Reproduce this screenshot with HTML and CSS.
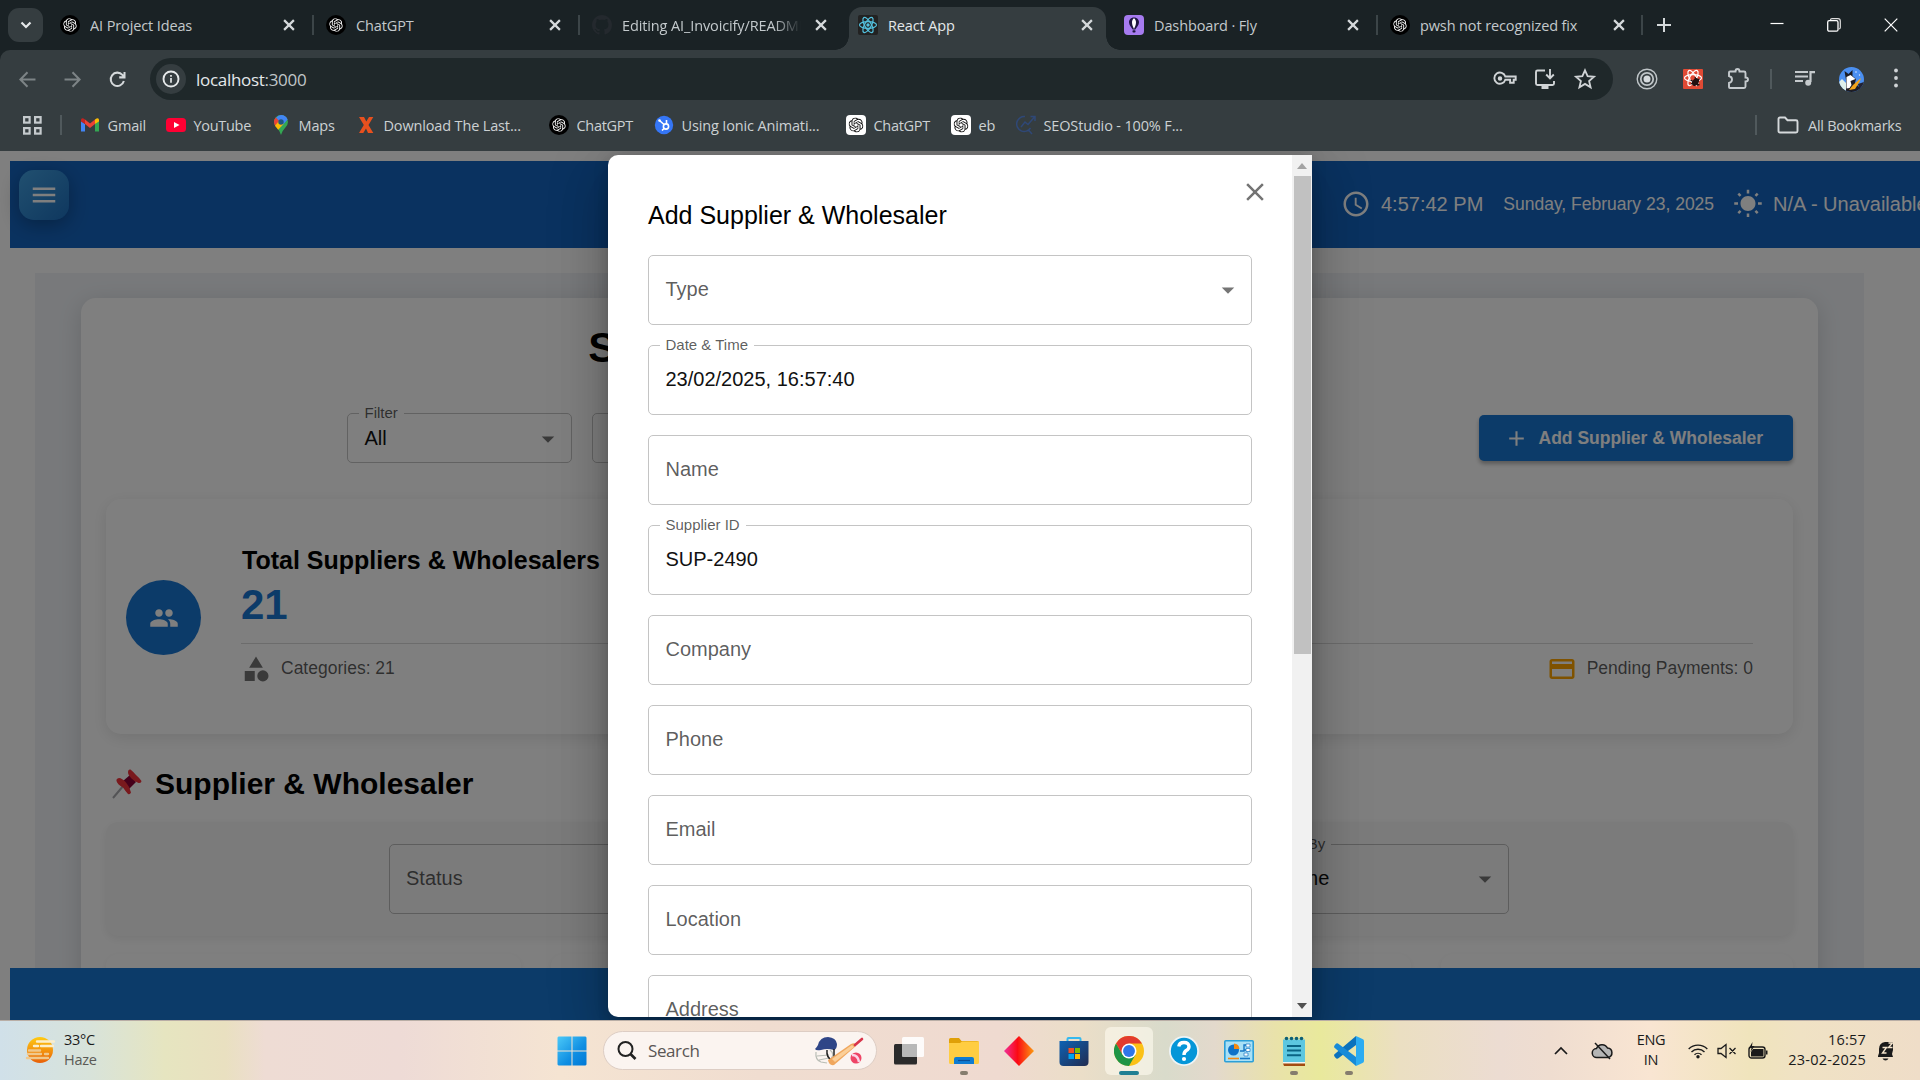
FILE: index.html
```html
<!DOCTYPE html>
<html lang="en">
<head>
<meta charset="utf-8">
<title>React App</title>
<link rel="stylesheet" href="styles.css">
</head>
<body>
<svg class="defs" aria-hidden="true">
  <symbol id="gpt" viewBox="0 0 24 24"><path d="M22.2819 9.8211a5.9847 5.9847 0 0 0-.5157-4.9108 6.0462 6.0462 0 0 0-6.5098-2.9A6.0651 6.0651 0 0 0 4.9807 4.1818a5.9847 5.9847 0 0 0-3.9977 2.9 6.0462 6.0462 0 0 0 .7427 7.0966 5.98 5.98 0 0 0 .511 4.9107 6.051 6.051 0 0 0 6.5146 2.9001A5.9847 5.9847 0 0 0 13.2599 24a6.0557 6.0557 0 0 0 5.7718-4.2058 5.9894 5.9894 0 0 0 3.9977-2.9001 6.0557 6.0557 0 0 0-.7475-7.0729zm-9.022 12.6081a4.4755 4.4755 0 0 1-2.8764-1.0408l.1419-.0804 4.7783-2.7582a.7948.7948 0 0 0 .3927-.6813v-6.7369l2.02 1.1686a.071.071 0 0 1 .038.052v5.5826a4.504 4.504 0 0 1-4.4945 4.4944zm-9.6607-4.1254a4.4708 4.4708 0 0 1-.5346-3.0137l.142.0852 4.783 2.7582a.7712.7712 0 0 0 .7806 0l5.8428-3.3685v2.3324a.0804.0804 0 0 1-.0332.0615L9.74 19.9502a4.4992 4.4992 0 0 1-6.1408-1.6464zM2.3408 7.8956a4.485 4.485 0 0 1 2.3655-1.9728V11.6a.7664.7664 0 0 0 .3879.6765l5.8144 3.3543-2.0201 1.1685a.0757.0757 0 0 1-.071 0l-4.8303-2.7865A4.504 4.504 0 0 1 2.3408 7.872zm16.5963 3.8558L13.1038 8.364 15.1192 7.2a.0757.0757 0 0 1 .071 0l4.8303 2.7913a4.4944 4.4944 0 0 1-.6765 8.1042v-5.6772a.79.79 0 0 0-.407-.667zm2.0107-3.0231l-.142-.0852-4.7735-2.7818a.7759.7759 0 0 0-.7854 0L9.409 9.2297V6.8974a.0662.0662 0 0 1 .0284-.0615l4.8303-2.7866a4.4992 4.4992 0 0 1 6.6802 4.66zM8.3065 12.863l-2.02-1.1638a.0804.0804 0 0 1-.038-.0567V6.0742a4.4992 4.4992 0 0 1 7.3757-3.4537l-.142.0805L8.704 5.459a.7948.7948 0 0 0-.3927.6813zm1.0976-2.3654l2.602-1.4998 2.6069 1.4998v2.9994l-2.5974 1.4997-2.6067-1.4997Z"/></symbol>
  <symbol id="gpt-dark" viewBox="0 0 20 20"><circle cx="10" cy="10" r="10" fill="#000"/><use href="#gpt" x="3.2" y="3.2" width="13.6" height="13.6" fill="#fff"/></symbol>
  <symbol id="gpt-light" viewBox="0 0 20 20"><rect width="20" height="20" rx="4" fill="#fff"/><use href="#gpt" x="2.6" y="2.6" width="14.8" height="14.8" fill="#111"/></symbol>
  <symbol id="x" viewBox="0 0 12 12"><path d="M1.8 1.8l8.4 8.4M10.2 1.8l-8.4 8.4" stroke="currentColor" stroke-width="1.9" fill="none"/></symbol>
  <symbol id="drop" viewBox="0 0 24 24"><path d="M7 10l5 5 5-5z" fill="currentColor"/></symbol>
</svg>

<div class="tabstrip">
  <div class="tab-search"><svg width="12" height="8" viewBox="0 0 12 8"><path d="M1.5 1.5L6 6l4.500-4.500" stroke="#e6e9ea" stroke-width="2.200" fill="none"/></svg></div>
  <div class="tab"><svg class="ico"><use href="#gpt-dark"/></svg><span class="tab-title">AI Project Ideas</span><svg class="tab-x"><use href="#x"/></svg></div>
  <div class="tab divided"><svg class="ico"><use href="#gpt-dark"/></svg><span class="tab-title">ChatGPT</span><svg class="tab-x"><use href="#x"/></svg></div>
  <div class="tab divided"><svg class="ico" viewBox="0 0 16 16"><path fill="#24292e" d="M8 0C3.580 0 0 3.580 0 8c0 3.540 2.290 6.530 5.470 7.590.4.070.55-.17.55-.38 0-.19-.01-.82-.01-1.490-2.010.37-2.530-.49-2.690-.94-.09-.23-.48-.94-.82-1.130-.28-.15-.68-.52-.01-.53.63-.01 1.080.58 1.230.82.72 1.210 1.870.87 2.330.66.070-.52.28-.87.51-1.070-1.780-.2-3.640-.89-3.640-3.950 0-.87.31-1.590.82-2.150-.08-.2-.36-1.020.08-2.120 0 0 .67-.21 2.200.82.64-.18 1.320-.27 2-.27s1.360.09 2 .27c1.530-1.040 2.200-.82 2.200-.82.44 1.100.16 1.920.08 2.120.51.56.82 1.270.82 2.150 0 3.070-1.870 3.750-3.650 3.950.29.25.54.73.54 1.480 0 1.070-.01 1.930-.01 2.200 0 .21.15.46.55.38A8.010 8.010 0 0 0 16 8c0-4.420-3.580-8-8-8z"/></svg><span class="tab-title faded">Editing AI_Invoicify/README</span><svg class="tab-x"><use href="#x"/></svg></div>
  <div class="tab active"><svg class="ico" viewBox="0 0 20 20"><rect width="20" height="20" rx="2" fill="#222"/><g fill="none" stroke="#53c1de" stroke-width="1.200"><ellipse cx="10" cy="10" rx="8.500" ry="3.300"/><ellipse cx="10" cy="10" rx="8.500" ry="3.300" transform="rotate(60 10 10)"/><ellipse cx="10" cy="10" rx="8.500" ry="3.300" transform="rotate(120 10 10)"/></g><circle cx="10" cy="10" r="1.700" fill="#53c1de"/></svg><span class="tab-title">React App</span><svg class="tab-x"><use href="#x"/></svg></div>
  <div class="tab"><svg class="ico" viewBox="0 0 20 20"><rect width="20" height="20" rx="4" fill="#a67bf0"/><path d="M10 2.500c3.200 0 5 2.200 5 4.800 0 2.900-2.200 4.700-3.700 7.200H8.700C7.200 12 5 10.200 5 7.300c0-2.600 1.800-4.800 5-4.800z" fill="#1e1540"/><path d="M10 3.200c1.500 1 2 2.600 2 4.300 0 2.400-1.200 4.500-2 6.500-.8-2-2-4.100-2-6.500 0-1.700.5-3.300 2-4.300z" fill="#fff"/><rect x="8.500" y="15.200" width="3" height="2.300" rx=".8" fill="#1e1540"/></svg><span class="tab-title">Dashboard · Fly</span><svg class="tab-x"><use href="#x"/></svg></div>
  <div class="tab divided"><svg class="ico"><use href="#gpt-dark"/></svg><span class="tab-title">pwsh not recognized fix</span><svg class="tab-x"><use href="#x"/></svg></div>
  <div class="new-tab"><svg width="14" height="14" viewBox="0 0 14 14"><path d="M7 0v14M0 7h14" stroke="#d5d9db" stroke-width="2"/></svg></div>
  <div class="win-controls">
    <svg viewBox="0 0 14 14"><path d="M.5 5.500h13" stroke="#fff" stroke-width="1.200"/></svg>
    <svg viewBox="0 0 14 14"><path d="M3.500 3V2Q3.500 .7 5 .7h6q2.300 0 2.300 2.300v6.500q0 1.500-1.500 1.500" fill="none" stroke="#ddd" stroke-width="1.200"/><rect x=".7" y="2.700" width="10.300" height="10.500" rx="1.500" fill="none" stroke="#fff" stroke-width="1.300"/></svg>
    <svg viewBox="0 0 14 14"><path d="M.7.7l12.600 12.600M13.300.7L.7 13.300" stroke="#fff" stroke-width="1.200"/></svg>
  </div>
</div>

<div class="chrome">
  <div class="toolbar">
    <svg class="nav dim" viewBox="0 0 16 16"><path d="M15.500 8H1.500M8 1.200L1.300 8 8 14.800"/></svg>
    <svg class="nav dim" viewBox="0 0 16 16"><path d="M.5 8h14M8 1.200L14.700 8 8 14.800"/></svg>
    <svg class="nav" viewBox="0 0 16 16"><path d="M14 9.500A6.300 6.300 0 1 1 12.600 3.600L14 5.200M14.600 1v5h-5"/></svg>
    <div class="omnibox">
      <span class="info"><svg width="18" height="18" viewBox="0 0 18 18"><circle cx="9" cy="9" r="7.500" fill="none" stroke="#e6e9ea" stroke-width="1.900"/><path d="M9 8v4.700M9 5v1.800" stroke="#e6e9ea" stroke-width="1.700"/></svg></span>
      <span class="url">localhost<span class="port">:3000</span></span>
      <svg class="act" viewBox="0 0 24 24"><g fill="none" stroke="#d0d4d6" stroke-width="1.900"><path d="M12.300 9.500H22.700v3.300h-2v3h-3.600v-3h-4.800A5.600 5.600 0 1 1 12.300 9.500z"/><circle cx="7" cy="11.500" r="1.300" fill="#d0d4d6"/></g></svg>
      <svg class="act" viewBox="0 0 24 24"><g fill="none" stroke="#d0d4d6" stroke-width="1.900"><path d="M12 3.500H4.500Q3 3.500 3 5v11.500q0 1.500 1.500 1.500h15q1.500 0 1.500-1.500V14M17 2v9M13.200 7.500L17 11.300l3.800-3.800"/><path d="M8.500 20.500h7" stroke-width="3"/></g></svg>
      <svg class="act" viewBox="0 0 24 24"><path d="M12 3.300l2.600 5.900 6.400.6-4.900 4.200 1.500 6.300-5.600-3.400-5.600 3.400 1.500-6.300L3 9.800l6.400-.6z" fill="none" stroke="#d0d4d6" stroke-width="1.800"/></svg>
    </div>
    <div class="extensions">
      <svg viewBox="0 0 24 24"><g fill="none" stroke="#bfc5c8"><circle cx="12" cy="12" r="9.800" stroke-width="1.400"/><circle cx="12" cy="12" r="6.200" stroke-width="1.800"/></g><circle cx="12" cy="12" r="3.500" fill="#d5dadd"/></svg>
      <svg viewBox="0 0 24 24"><rect x="2" y="2" width="20" height="20" rx="1" fill="#e04a34"/><g fill="none" stroke="#fff" stroke-width="1.200"><ellipse cx="12" cy="11" rx="8.500" ry="3.300"/><ellipse cx="12" cy="11" rx="8.500" ry="3.300" transform="rotate(60 12 11)"/><ellipse cx="12" cy="11" rx="8.500" ry="3.300" transform="rotate(120 12 11)"/></g><ellipse cx="14.500" cy="15" rx="3" ry="4.200" fill="#211" transform="rotate(35 14.500 15)"/><path d="M9.500 13l9 5M10 17l8.500-5M14 10l3 9" stroke="#211" stroke-width="1.200"/></svg>
      <svg viewBox="0 0 24 24"><path d="M4 4.500h5.500Q9.500 2 11.500 2t2 2.500H18Q19.500 4.500 19.500 6v4.500q2.500 0 2.500 2t-2.500 2v5q0 1.500-1.500 1.500H4Q3 21 3 20v-4q3-.8 3-3.500T3 9V5.500Q3 4.500 4 4.500z" fill="none" stroke="#c5cacd" stroke-width="1.900"/></svg>
      <i class="sep"></i>
      <svg viewBox="0 0 24 24"><path d="M2 5h13M2 9.500h13M2 14h8" stroke="#c5cacd" stroke-width="2" /><path d="M17.500 15V5.200H22" fill="none" stroke="#c5cacd" stroke-width="2.200"/><circle cx="15.200" cy="15.800" r="3" fill="#c5cacd"/></svg>
      <svg class="avatar" viewBox="0 0 25 25"><defs><clipPath id="av"><circle cx="12.500" cy="12.500" r="12.500"/></clipPath></defs><g clip-path="url(#av)"><rect width="25" height="25" fill="#4b8ff0"/><path d="M0 15l3-3 4 4v9H0z" fill="#dff0ea"/><path d="M7 25V13L5.500 4l4 3 4-4v6l3.500 3-1 4 6 6v3z" fill="#1c1c24"/><path d="M7.500 10l4-2 5 4-5 2 1 4-2 3-3 .500z" fill="#fff"/><path d="M22 11l-8 7-4 5 6-1 5-8z" fill="#f2a31b"/><path d="M19 17l6-2v7l-4 3z" fill="#223"/><circle cx="17" cy="5" r=".8" fill="#dce9ff"/><circle cx="20.500" cy="8" r=".7" fill="#dce9ff"/></g></svg>
      <svg viewBox="0 0 24 24"><g fill="#d0d4d6"><circle cx="12" cy="3.500" r="1.900"/><circle cx="12" cy="11" r="1.900"/><circle cx="12" cy="18.500" r="1.900"/></g></svg>
    </div>
  </div>
  <div class="bookmarks">
    <svg class="apps" viewBox="0 0 19 19"><g fill="none" stroke="#c5cacd" stroke-width="2.200"><rect x="1.100" y="1.100" width="5.500" height="5.500"/><rect x="12.100" y="1.100" width="5.500" height="5.500"/><rect x="1.100" y="12.100" width="5.500" height="5.500"/><rect x="12.100" y="12.100" width="5.500" height="5.500"/></g></svg>
    <i class="sep"></i>
    <span class="bm b1"><svg viewBox="0 0 20 20"><path d="M1 16.500V6l4 3v7.500z" fill="#4285f4"/><path d="M15 16.500V9l4-3v10.500z" fill="#34a853"/><path d="M15 9V4.500l1.500-1Q19 2.800 19 5v1.500z" fill="#fbbc04"/><path d="M5 9V4.500l5 4 5-4V9l-5 4z" fill="#ea4335"/><path d="M1 6.500V5q0-2.200 2.500-1.500l1.500 1V9z" fill="#c5221f"/></svg>Gmail</span>
    <span class="bm b2"><svg viewBox="0 0 20 20"><rect y="3" width="20" height="14" rx="3.500" fill="#f03"/><path d="M8 7l5.500 3L8 13z" fill="#fff"/></svg>YouTube</span>
    <span class="bm b3"><svg viewBox="0 0 20 20"><path d="M10 20q-1-4-4-7-3-3-3-6a7 7 0 0 1 14 0q0 3-3 6-3 3-4 7z" fill="#34a853"/><path d="M10 0a7 7 0 0 1 6.600 4.500L10 12 5 3q2-3 5-3z" fill="#4285f4"/><path d="M4.700 2.500L9 6.500l-4.500 5Q3 9.500 3 7q0-2.700 1.700-4.500z" fill="#ea4335"/><path d="M4 10.700l5-5.900 3.500 4.200-5.300 5.700z" fill="#fbbc04"/><circle cx="10" cy="7" r="2.700" fill="#21577f"/></svg>Maps</span>
    <span class="bm b4"><svg viewBox="0 0 20 20"><path d="M3 2h5l2.300 4.500L13 2h4.300l-4.800 8 4.800 8H12l-2-4.500L7.300 18H3l4.800-8z" fill="#e8501e"/></svg>Download The Last...</span>
    <span class="bm b5"><svg><use href="#gpt-dark"/></svg>ChatGPT</span>
    <span class="bm b6"><svg viewBox="0 0 20 20"><circle cx="10" cy="10" r="9.200" fill="#3576f6"/><g fill="none" stroke="#fff" stroke-width="1.600"><circle cx="12" cy="11.500" r="2.600"/><path d="M5.500 5.500l4.500 4M12.500 5v4M10 13.500l-2 2"/></g><circle cx="5.500" cy="5.500" r="1.300" fill="#fff"/></svg>Using Ionic Animati...</span>
    <span class="bm b7"><svg><use href="#gpt-light"/></svg>ChatGPT</span>
    <span class="bm b8"><svg><use href="#gpt-light"/></svg>eb</span>
    <span class="bm b9"><svg viewBox="0 0 20 20"><g fill="none" stroke="#2f4877" stroke-width="1.500"><path d="M9 1.500A7.500 7.500 0 1 0 14.500 13M12 14.500l4 4.500M5 12l4-5 3 2.500L18.500 2M14.500 1.500h4.500V6"/></g></svg>SEOStudio - 100% F...</span>
    <i class="sep far"></i>
    <span class="bm all"><svg viewBox="0 0 22 18"><path d="M1.500 3q0-1.500 1.500-1.500h5l2.500 2.700H19q1.500 0 1.500 1.500V15q0 1.500-1.500 1.500H3Q1.500 16.500 1.500 15z" fill="none" stroke="#d5d9db" stroke-width="1.900"/></svg>All Bookmarks</span>
  </div>
</div>

<div class="page">
  <header class="app-bar">
    <span class="burger"><svg width="30" height="30" viewBox="0 0 24 24"><path fill="#fff" d="M3 18h18v-2H3v2zm0-5h18v-2H3v2zm0-7v2h18V6H3z"/></svg></span>
    <div class="status">
      <svg width="30" height="30" viewBox="0 0 24 24"><path fill="#fff" d="M11.990 2C6.470 2 2 6.480 2 12s4.470 10 9.990 10C17.520 22 22 17.520 22 12S17.520 2 11.990 2zM12 20c-4.420 0-8-3.580-8-8s3.580-8 8-8 8 3.580 8 8-3.580 8-8 8zm.5-13H11v6l5.250 3.150.75-1.230-4.500-2.670z"/></svg>
      <span class="big">4:57:42 PM</span>
      <span class="date">Sunday, February 23, 2025</span>
      <svg width="30" height="30" viewBox="0 0 24 24"><path fill="#fff" d="M6.760 4.840l-1.800-1.790-1.410 1.410 1.790 1.790 1.420-1.410zM4 10.500H1v2h3v-2zm9-9.950h-2V3.500h2V.55zm7.450 3.910l-1.410-1.410-1.790 1.790 1.410 1.410 1.790-1.790zm-3.210 13.700l1.790 1.800 1.410-1.410-1.800-1.790-1.400 1.400zM20 10.500v2h3v-2h-3zm-8-5c-3.310 0-6 2.690-6 6s2.690 6 6 6 6-2.690 6-6-2.690-6-6-6zm-1 16.950h2V19.500h-2v2.950zm-7.450-3.910l1.410 1.410 1.790-1.800-1.410-1.410-1.790 1.800z"/></svg>
      <span class="big">N/A - Unavailable</span>
    </div>
  </header>
  <main class="backdrop-panel">
    <section class="sheet">
      <h1>Supplier &amp; Wholesaler Management</h1>
      <div class="controls">
        <div class="field small"><span class="label up">Filter</span><span class="value">All</span><svg class="caret"><use href="#drop"/></svg></div>
        <div class="field small wide"></div>
        <span class="add-btn"><svg width="25" height="25" viewBox="0 0 24 24"><path fill="#fff" d="M19 13h-6v6h-2v-6H5v-2h6V5h2v6h6v2z"/></svg>Add Supplier &amp; Wholesaler</span>
      </div>
      <div class="summary">
        <span class="bubble"><svg width="30" height="30" viewBox="0 0 24 24"><path fill="#fff" d="M16 11c1.660 0 2.990-1.340 2.990-3S17.660 5 16 5c-1.660 0-3 1.340-3 3s1.340 3 3 3zm-8 0c1.660 0 2.990-1.340 2.990-3S9.660 5 8 5C6.340 5 5 6.340 5 8s1.340 3 3 3zm0 2c-2.330 0-7 1.170-7 3.500V19h14v-2.500c0-2.330-4.670-3.500-7-3.500zm8 0c-.29 0-.62.02-.97.05 1.160.84 1.970 1.970 1.970 3.450V19h6v-2.500c0-2.330-4.670-3.500-7-3.500z"/></svg></span>
        <div class="summary-body">
          <div class="summary-title">Total Suppliers &amp; Wholesalers</div>
          <div class="summary-num">21</div>
          <div class="summary-foot">
            <span class="stat"><svg width="30" height="30" viewBox="0 0 24 24" fill="#757575"><path d="M12 2l-5.500 9h11zM3 13.500h8v8H3z"/><circle cx="17.500" cy="17.500" r="4.500"/></svg>Categories: 21</span>
            <span class="stat"><svg width="30" height="30" viewBox="0 0 24 24"><path fill="#ffa500" d="M20 4H4c-1.110 0-1.990.89-1.990 2L2 18c0 1.110.89 2 2 2h16c1.110 0 2-.89 2-2V6c0-1.110-.89-2-2-2zm0 14H4v-6h16v6zm0-10H4V6h16v2z"/></svg>Pending Payments: 0</span>
          </div>
        </div>
      </div>
      <h2><svg width="30" height="30" viewBox="0 0 30 30"><path d="M1 29L12 16" stroke="#a8a8ac" stroke-width="2"/><path d="M11 12l7-6 6 7-7 7z" fill="#8a0034"/><path d="M4.500 12Q4 9.500 7 9q3 0 7 4.500t5 10q-1 2.500-3 1.500-2-2-5-6.500-5.500-3-6.500-6.500z" fill="#f2323a"/><path d="M16 3.500q0-3.500 2.500-3 2.500 2 5.500 5.500 3.500 3 5.500 6 0 2.500-3 2Q23 13 19.500 9.500 16 6 16 3.500z" fill="#f2323a"/></svg>Supplier &amp; Wholesaler</h2>
      <div class="filters">
        <div class="field"><span class="label">Status</span></div>
        <div class="field"></div>
        <div class="field"></div>
        <div class="field"><span class="label up">Sort By</span><span class="value">Name</span><svg class="caret"><use href="#drop"/></svg></div>
      </div>
      <div class="cards"><div></div><div></div><div></div><div></div></div>
    </section>
  </main>
  <footer class="app-foot"></footer>
  <div class="scrim"></div>
  <div class="modal">
    <form class="modal-body">
      <svg class="modal-close" width="30" height="30" viewBox="0 0 24 24"><path fill="#757575" d="M19 6.410L17.590 5 12 10.590 6.410 5 5 6.410 10.590 12 5 17.590 6.410 19 12 13.410 17.590 19 19 17.590 13.410 12z"/></svg>
      <div class="modal-title">Add Supplier &amp; Wholesaler</div>
      <div class="field"><span class="label">Type</span><svg class="caret"><use href="#drop"/></svg></div>
      <div class="field"><span class="label up">Date &amp; Time</span><span class="value">23/02/2025, 16:57:40</span></div>
      <div class="field"><span class="label">Name</span></div>
      <div class="field"><span class="label up">Supplier ID</span><span class="value">SUP-2490</span></div>
      <div class="field"><span class="label">Company</span></div>
      <div class="field"><span class="label">Phone</span></div>
      <div class="field"><span class="label">Email</span></div>
      <div class="field"><span class="label">Location</span></div>
      <div class="field"><span class="label">Address</span></div>
    </form>
    <div class="scrollbar">
      <svg width="10" height="6" viewBox="0 0 10 6"><path d="M0 6l5-6 5 6z" fill="#a3a3a3"/></svg>
      <i class="thumb"></i>
      <svg width="10" height="6" viewBox="0 0 10 6"><path d="M0 0l5 6 5-6z" fill="#505050"/></svg>
    </div>
  </div>
</div>

<div class="taskbar">
  <div class="weather">
    <svg width="30" height="30" viewBox="0 0 30 30"><defs><linearGradient id="sun" x2="0" y2="1"><stop stop-color="#ffcb12"/><stop offset="1" stop-color="#e8600a"/></linearGradient></defs><circle cx="15" cy="15" r="13" fill="url(#sun)"/><g stroke-linecap="round" stroke-width="2.400"><path d="M12 6.500h17M9 11h4m3 0h12" stroke="#fbeecb"/><path d="M4 15.500h11M3 19h13m4 0h3M2 23h21" stroke="#f0c88c"/></g></svg>
    <div class="weather-text"><span>33°C</span><span class="muted">Haze</span></div>
  </div>
  <div class="dock">
    <span class="app"><svg width="30" height="30" viewBox="0 0 30 30"><defs><linearGradient id="win" x2="1" y2="1"><stop stop-color="#4cc9f8"/><stop offset=".6" stop-color="#0f8ee2"/><stop offset="1" stop-color="#0078d6"/></linearGradient></defs><path fill="url(#win)" d="M1.500.5H14.500v14H.5v-13zM15.500.5H28.500l1 1v13h-14zM.5 15.500h14v14H1.500l-1-1zM15.500 15.500h14v13l-1 1h-13z"/></svg></span>
    <div class="search">
      <svg width="20" height="20" viewBox="0 0 20 20"><circle cx="8.500" cy="8" r="7" fill="none" stroke="#222" stroke-width="2"/><path d="M13.500 13l5 5" stroke="#222" stroke-width="2.600"/></svg>
      <span>Search</span>
      <svg width="50" height="30" viewBox="0 0 50 30"><path d="M2 16q-1 8 5 10l6 1M3 20l12-1M5 24l10-2M16 14q5 4 1 9" fill="none" stroke="#b9bdb5" stroke-width="1.200"/><path d="M1 13q2-2 3-4Q6 1 14 1q8 .5 9 7 0 5-3 6-7-2-13 0-5 1-6-1z" fill="#2f4587"/><path d="M13 14q-1 8 6 11M20 13v8" fill="none" stroke="#222" stroke-width="1.500"/><path d="M14 24L37 8q5-2 5 2L20 29q-5 1-6-5z" fill="#f0a75e"/><path d="M18 23L38 9l2 2-19 15z" fill="#fbcf98"/><path d="M41 9l7-6" stroke="#d8344a" stroke-width="2.600" stroke-linecap="round"/><circle cx="42" cy="22" r="5.500" fill="#ee4566"/><path d="M38 19q6 0 7 7" stroke="#fbd5e8" stroke-width="2.500" fill="none"/></svg>
    </div>
    <span class="app"><svg width="30" height="30" viewBox="0 0 30 30"><rect x="0" y="8" width="23" height="20.500" rx="1.500" fill="#2b2b2b"/><rect x="8" y="1" width="22" height="20" rx="1.500" fill="#fff" fill-opacity=".88"/><path d="M8 8h15v13H8z" fill="#999" fill-opacity=".6"/></svg></span>
    <span class="app"><svg width="30" height="30" viewBox="0 0 30 30"><path d="M0 3.500Q0 2 1.500 2H10l2.500 3H28q2 0 2 2v4H0z" fill="#e0a008"/><path d="M0 7h11l2-1.500h17v21q0 1.500-1.500 1.500h-27Q0 28 0 26.500z" fill="#ffcd42"/><path d="M5 28v-5q0-2 2-2h16q2 0 2 2v5z" fill="#0f7cd2"/><path d="M9 24.500h12" stroke="#0a4f97" stroke-width="1.200"/></svg><i class="dot"></i></span>
    <span class="app"><svg width="30" height="30" viewBox="0 0 30 30"><defs><linearGradient id="dia"><stop stop-color="#f0309a"/><stop offset=".45" stop-color="#fb0a14"/><stop offset="1" stop-color="#fb9a10"/></linearGradient></defs><path d="M15 0l15 15-15 15L0 15z" fill="url(#dia)"/></svg></span>
    <span class="app"><svg width="30" height="30" viewBox="0 0 30 30"><defs><linearGradient id="ms" x2="1" y2="1"><stop stop-color="#0d62b4"/><stop offset="1" stop-color="#222c50"/></linearGradient></defs><path d="M8.500 7V3q0-1 1-1h11q1 0 1 1v4" fill="none" stroke="#35b9ef" stroke-width="2"/><path d="M.5 5h29v21q0 4-4 4h-21q-4 0-4-4z" fill="url(#ms)"/><path d="M9.500 12H15v5H9.500z" fill="#f25022"/><path d="M16 12h5v5h-5z" fill="#7fba00"/><path d="M9.500 18H15v5H9.500z" fill="#00a4ef"/><path d="M16 18h5v5h-5z" fill="#ffb900"/></svg></span>
    <span class="app current"><svg width="30" height="30" viewBox="0 0 48 48"><circle cx="24" cy="24" r="24" fill="#fbc116"/><path d="M3.200 12A24 24 0 0 1 44.800 12H24L13.600 30z" fill="#e33b2e"/><path d="M3.200 12A24 24 0 0 0 24 48L34.400 30H24L13.600 30z" fill="#1e9446"/><circle cx="24" cy="24" r="12" fill="#fff"/><circle cx="24" cy="24" r="9.500" fill="#2f76e8"/></svg><i class="bar"></i></span>
    <span class="app"><svg width="30" height="30" viewBox="0 0 30 30"><circle cx="15" cy="15" r="15" fill="#eef4f6"/><circle cx="15" cy="15" r="13.200" fill="#0596d8"/><path d="M9.800 10.500q.5-4 5.200-4t5 4q0 2.500-2.700 4Q15 16 15 19" fill="none" stroke="#fff" stroke-width="3.400"/><circle cx="15" cy="23" r="2.100" fill="#fff"/></svg></span>
    <span class="app"><svg width="30" height="30" viewBox="0 0 30 30"><rect x=".8" y="4.800" width="28.400" height="21" rx="1" fill="#a9e0f6" stroke="#2b9fd8" stroke-width="1.600"/><circle cx="9.500" cy="14" r="5.500" fill="#0f72c8"/><path d="M10 13V7.500a6 6 0 0 1 5.500 5.500z" fill="#f58a12"/><path d="M16 15h4V9h4M20 14h5M20 18h4" stroke="#1577c4" stroke-width="1.400" fill="none"/><path d="M22 8h4v3h-4zM22 12.500h4v3h-4zM20 17h4v3h-4z" fill="#fff" stroke="#1577c4" stroke-width=".7"/><path d="M4 22.500h11" stroke="#f58a12" stroke-width="1.600"/><path d="M16 22.500h10" stroke="#1577c4" stroke-width="1.600"/></svg></span>
    <span class="app"><svg width="30" height="30" viewBox="0 0 30 30"><path d="M4 3.500h22V26H4z" fill="#5cc7e0"/><path d="M4 26h22v1.800H4z" fill="#f4f4f0"/><path d="M4 27.600h22V30H5z" fill="#a24b10"/><path d="M8 10h14M8 14.500h14M8 19.200h14" stroke="#0a6484" stroke-width="2"/><g fill="#0c6076"><circle cx="7.500" cy="2.500" r="1.800"/><circle cx="12.500" cy="2.500" r="1.800"/><circle cx="17.500" cy="2.500" r="1.800"/><circle cx="22.500" cy="2.500" r="1.800"/></g></svg><i class="dot"></i></span>
    <span class="app"><svg width="30" height="30" viewBox="0 0 30 30"><path d="M22 0v9L4 22.500q-1.500.5-2.500-.7L.5 20.500q-1-1.500.3-2.500z" fill="#0a72bd"/><path d="M22 30v-9L4 7.500Q2.500 7 1.500 8.200L.5 9.500Q-.5 11 .8 12z" fill="#178bd8"/><path d="M22 0l6.500 3Q30 3.700 30 5v20q0 1.300-1.500 2L22 30z" fill="#2bacf2"/></svg><i class="dot"></i></span>
  </div>
  <div class="tray">
    <svg class="t-up" width="14" height="10" viewBox="0 0 14 10"><path d="M1 8l6-6 6 6" fill="none" stroke="#1a1a1a" stroke-width="1.700"/></svg>
    <svg class="t-cloud" width="22" height="18" viewBox="0 0 22 18"><path d="M6 15.500a4.500 4.500 0 0 1-.5-9A6 6 0 0 1 16.500 6a4.800 4.800 0 0 1 .5 9.500z" fill="#b5b5b5" stroke="#1a1a1a" stroke-width="1.500"/><path d="M4 1l15 16" stroke="#1a1a1a" stroke-width="1.500"/></svg>
    <div class="lang"><span>ENG</span><span>IN</span></div>
    <svg class="t-wifi" width="20" height="16" viewBox="0 0 20 16"><g fill="none" stroke="#1a1a1a" stroke-width="1.400"><path d="M.7 6a13 13 0 0 1 18.600 0M3.500 9a9.200 9.200 0 0 1 13 0M6.500 11.800a5 5 0 0 1 7 0"/></g><circle cx="10" cy="13.800" r="1.700" fill="#1a1a1a"/></svg>
    <svg class="t-vol" width="20" height="16" viewBox="0 0 20 16"><path d="M1 5.500h3L9 1.500v13L4 10.500H1zM12.500 5l6 6M18.500 5l-6 6" fill="none" stroke="#1a1a1a" stroke-width="1.300"/></svg>
    <svg class="t-bat" width="20" height="18" viewBox="0 0 20 18"><rect x="1" y="5" width="16" height="11" rx="2.500" fill="none" stroke="#1a1a1a" stroke-width="1.400"/><path d="M5 7h10.500v7.500H3V10zM18 8.500h1.500v4H18z" fill="#1a1a1a"/><path d="M4.500 0L1 6h2.500l-1 4L6.500 4H4z" fill="#1a1a1a"/></svg>
    <div class="clock"><span>16:57</span><span>23-02-2025</span></div>
    <svg class="t-bell" width="18" height="20" viewBox="0 0 18 20"><path d="M2 8q0-6 6-7h8v8l-1 4 1 3H1v-1l1-3z" fill="#1a1a1a"/><path d="M5.500 17.500h6q-1 2-3 2t-3-2z" fill="#1a1a1a"/><path d="M5.500 6.500h4l-4 5.500h4M11.500 2h4l-4 4.500h4" stroke="#f4e4cc" stroke-width="1.400" fill="none"/></svg>
  </div>
</div>
</body>
</html>
```

FILE: styles.css
```css
* { box-sizing: border-box; }
body {
  margin: 0;
  width: 1920px;
  height: 1080px;
  overflow: hidden;
  font-family: "Liberation Sans", Arial, sans-serif;
  background: #1b2326;
}
svg { display: block; flex: none; }
.defs { position: absolute; width: 0; height: 0; }

/* browser frame */
.tabstrip, .chrome, .taskbar { font-family: "Open Sans", "Noto Sans", sans-serif; }
.tabstrip {
  height: 50px;
  display: flex;
  background: #1a2225;
  color: #c3c9cc;
}
.tab-search {
  width: 35px;
  height: 34px;
  margin: 8px 7px 0 8px;
  border-radius: 11px;
  background: #353d40;
  display: flex;
  align-items: center;
  justify-content: center;
}
.tab {
  position: relative;
  width: 266px;
  height: 50px;
  padding: 0 20px 0 10px;
  display: flex;
  align-items: center;
  font-size: 14.500px;
  letter-spacing: -.12px;
  white-space: nowrap;
}
.ico { width: 20px; height: 20px; margin-right: 10px; }
.tab-title { flex: 1; overflow: hidden; }
.tab-title.faded { margin-right: 13px; -webkit-mask-image: linear-gradient(90deg, #000 85%, transparent); mask-image: linear-gradient(90deg, #000 85%, transparent); }
.tab-x { width: 14px; height: 14px; color: #d5d9db; }
.tab.divided::before {
  content: "";
  position: absolute;
  left: -4px;
  top: 15px;
  width: 2px;
  height: 20px;
  background: #3c4548;
}
.tab.active { color: #e4e8ea; }
.tab.active > * { position: relative; z-index: 1; }
.tab.active::before {
  content: "";
  position: absolute;
  left: 1px;
  top: 7px;
  width: 257px;
  height: 43px;
  border-radius: 13px 13px 0 0;
  background: #353d40;
}
.tab.active::after {
  content: "";
  position: absolute;
  left: -13px;
  bottom: 0;
  width: 285px;
  height: 14px;
  background:
    radial-gradient(circle at 0 0, transparent 13.500px, #353d40 14px) left / 14px 14px no-repeat,
    radial-gradient(circle at 100% 0, transparent 13.500px, #353d40 14px) right / 14px 14px no-repeat;
}
.new-tab {
  width: 42px;
  height: 20px;
  margin-top: 15px;
  margin-left: -5px;
  border-left: 2px solid #3c4548;
  padding: 3px 0 0 14px;
}
.win-controls {
  margin-left: auto;
  margin-right: 22px;
  display: flex;
  align-items: center;
  gap: 43px;
}
.win-controls svg { width: 14px; height: 14px; }

.chrome {
  height: 101px;
  background: #353d40;
  border-radius: 10px 10px 0 0;
}
.toolbar {
  height: 58px;
  padding: 8px 15px 0 19px;
  display: flex;
  align-items: flex-start;
}
.nav {
  width: 17px;
  height: 17px;
  margin: 13px 28px 0 0;
  fill: none;
  stroke: #d5d9db;
  stroke-width: 1.900;
}
.nav.dim { stroke: #7d8486; }
.omnibox {
  width: 1463px;
  flex: none;
  height: 42px;
  margin-left: -4px;
  padding: 0 16px 0 6px;
  border-radius: 21px;
  background: #1f282a;
  display: flex;
  align-items: center;
}
.info {
  width: 30px;
  height: 30px;
  border-radius: 50%;
  background: #353d40;
  display: flex;
  align-items: center;
  justify-content: center;
}
.url { flex: 1; margin-left: 10px; font-size: 17px; letter-spacing: -.3px; color: #e4e8ea; }
.port { color: #c0c6c8; }
.act { width: 24px; height: 24px; margin-left: 16px; }
.extensions { display: flex; align-items: center; height: 42px; margin-left: 22px; }
.extensions svg { width: 24px; height: 24px; margin-right: 21.500px; }
.extensions svg:nth-of-type(3) { margin-right: 20px; }
.extensions .avatar { width: 25px; height: 25px; margin-right: 20px; }
.extensions svg:last-child { margin-right: 0; }
.sep { width: 2px; height: 20px; background: #50595c; flex: none; }
.extensions .sep { height: 20px; margin-right: 21px; }

.bookmarks {
  height: 36px;
  padding: 0 17px 2px 23px;
  display: flex;
  align-items: center;
  font-size: 14.500px;
  letter-spacing: -.15px;
  color: #ccd1d3;
  white-space: nowrap;
}
.apps { width: 19px; height: 19px; margin-right: 18px; }
.bm { display: flex; align-items: center; gap: 7.500px; flex: none; }
.bm svg { width: 20px; height: 20px; }
.b1 { width: 86px; margin-left: 18px; }
.b2 { width: 105px; letter-spacing: -.3px; }
.b3 { width: 85px; }
.b4 { width: 193px; }
.b5 { width: 105px; letter-spacing: -.3px; }
.b6 { width: 192px; }
.b7 { width: 105px; letter-spacing: -.3px; }
.b8 { width: 65px; }
.bm.all { gap: 9px; margin-left: 20px; width: 126px; letter-spacing: -.25px; }
.bm.all svg { width: 22px; height: 18px; }
.sep.far { margin-left: auto; }

/* application page */
.page {
  position: relative;
  height: 869px;
  padding: 10px 0 0 10px;
  background: #fff;
  overflow: hidden;
}
.app-bar {
  height: 87px;
  background: #1565c0;
  display: flex;
  align-items: flex-start;
  color: #fff;
}
.burger {
  flex: none;
  width: 50px;
  height: 50px;
  margin: 9px 0 0 9px;
  border-radius: 15px;
  background: linear-gradient(135deg, #42a0e0, #1e70bf);
  box-shadow: 0 5px 20px rgba(0, 0, 0, .3);
  display: flex;
  align-items: center;
  justify-content: center;
}
.status {
  flex: none;
  margin-left: 1272px;
  height: 86px;
  display: flex;
  align-items: center;
  gap: 10px;
  white-space: nowrap;
}
.big { font-size: 20px; }
.date { margin: 0 9px 0 10px; font-size: 17.500px; }
.backdrop-panel {
  margin: 25px 56px 0 25px;
  height: 720px;
  padding: 25px 46px 0;
  background: #f0f3f7;
}
.sheet {
  height: 760px;
  padding: 23px 25px 0;
  border-radius: 15px;
  background: #fff;
  box-shadow: 0 5px 25px rgba(0, 0, 0, .14);
}
h1 {
  margin: 0;
  height: 53px;
  line-height: 53px;
  text-align: center;
  font-size: 42.500px;
  white-space: nowrap;
}
.controls {
  display: flex;
  align-items: center;
  gap: 20px;
  height: 50px;
  margin-top: 39px;
  padding-left: 241px;
}
.field {
  position: relative;
  height: 70px;
  padding: 0 8px 2px 16.500px;
  border: 1px solid #c4c4c4;
  border-radius: 5px;
  display: flex;
  align-items: center;
  font-size: 20px;
  color: rgba(0, 0, 0, .87);
}
.label { color: rgba(0, 0, 0, .65); }
.label.up {
  position: absolute;
  left: 10.500px;
  top: -10px;
  padding: 0 6px;
  font-size: 15px;
  line-height: 18px;
  background: #fff;
}
.value { color: #111; }
.caret { width: 30px; height: 30px; margin: 2px 0 0 auto; color: #757575; }
.field.small { width: 225px; height: 50px; padding-bottom: 0; }
.field.small.wide { width: 312px; }
.add-btn {
  margin-left: auto;
  width: 314px;
  height: 46px;
  padding-left: 25px;
  border-radius: 5px;
  background: #1976d2;
  box-shadow: 0 3px 4px rgba(0, 0, 0, .3);
  display: flex;
  align-items: center;
  gap: 9.500px;
  font-size: 17.500px;
  font-weight: 700;
  color: #fff;
  white-space: nowrap;
}
.summary {
  height: 235px;
  margin-top: 36px;
  padding: 0 40px 0 20px;
  border-radius: 15px;
  background: #fff;
  box-shadow: 0 4px 16px rgba(0, 0, 0, .1);
  display: flex;
  align-items: flex-start;
}
.bubble {
  width: 75px;
  height: 75px;
  margin-top: 81px;
  border-radius: 50%;
  background: #1976d2;
  display: flex;
  align-items: center;
  justify-content: center;
}
.summary-body { flex: 1; margin-left: 40px; padding-top: 41px; }
.summary-title { padding-left: 1px; font-size: 25px; font-weight: 700; line-height: 40px; }
.summary-num { font-size: 42px; font-weight: 700; line-height: 50px; color: #1976d2; }
.summary-foot {
  display: flex;
  justify-content: space-between;
  margin-top: 13px;
  padding-top: 10px;
  border-top: 1px solid #d9d9d9;
}
.stat { display: flex; align-items: center; gap: 10px; font-size: 17.500px; line-height: 26px; color: rgba(0, 0, 0, .65); }
.stat svg { margin-bottom: -2px; }
h2 {
  margin: 30px 0 18px 6px;
  height: 40px;
  display: flex;
  align-items: center;
  gap: 13px;
  font-size: 30px;
}
.filters {
  height: 114px;
  padding-right: 2px;
  display: flex;
  justify-content: center;
  align-items: center;
  gap: 40px;
  border-radius: 12px;
  background: #f6f6f6;
  box-shadow: 0 3px 10px rgba(0, 0, 0, .07);
}
.filters .field { width: 250px; border-color: #bbb; }
.filters .label.up { background: #f6f6f6; }
.cards { display: flex; gap: 30px; margin-top: 18px; }
.cards div { width: 415px; height: 60px; flex: none; border-radius: 12px; background: #fff; box-shadow: 0 2px 7px rgba(0, 0, 0, .06); }
.cards div:last-child { width: 352px; }
.app-foot {
  position: absolute;
  left: 10px;
  right: 0;
  bottom: 0;
  height: 52px;
  background: #1976d2;
}
.scrim { position: absolute; inset: 0; background: rgba(0, 0, 0, .5); }

.modal {
  position: absolute;
  left: 608px;
  top: 4px;
  width: 704px;
  height: 862px;
  display: flex;
  overflow: hidden;
  border-radius: 10px 0 0 10px;
  background: #fff;
  box-shadow: 0 14px 19px -9px rgba(0, 0, 0, .2), 0 30px 48px 4px rgba(0, 0, 0, .14), 0 11px 58px 10px rgba(0, 0, 0, .12), 0 0 16px rgba(0, 0, 0, .12);
}
.modal-body {
  width: 684px;
  padding: 40px 40px 0;
  display: flex;
  flex-direction: column;
  gap: 20px;
}
.modal-body .field { flex: none; }
.modal-title { height: 40px; line-height: 40px; font-size: 25px; color: #000; }
.modal-close { position: absolute; left: 632px; top: 22px; }
.scrollbar {
  width: 20px;
  padding: 8px 0;
  background: #f1f1f1;
  display: flex;
  flex-direction: column;
  align-items: center;
}
.thumb { width: 17px; height: 478px; margin: 7px 0 auto; background: #c1c1c1; }

/* taskbar */
.taskbar {
  height: 60px;
  display: flex;
  align-items: center;
  border-top: 1px solid #b9aea6;
  color: #1a1a1a;
  font-size: 14.500px;
  letter-spacing: -.3px;
  background: linear-gradient(90deg, #d0e0e9 0, #d8e3da 90px, #e6e5c0 165px, #e9e0c0 225px, #eedcd4 265px, #eedbd6 400px, #f5e4d2 560px, #f0ddd0 760px, #efdad0 1000px, #ebdec8 1080px, #d9dbcb 1165px, #e3d9cc 1215px, #e9e2aa 1275px, #e9e99c 1320px, #ebdfc2 1400px, #ecdcd2 1500px, #efddd0 1550px, #f9e5d2 1650px, #f0e4bc 1750px, #f0e2c4 1800px, #efddc8 1920px);
}
.weather { width: 544px; padding-left: 25px; display: flex; align-items: center; gap: 9px; margin-top: -1px; }
.weather-text { display: flex; flex-direction: column; line-height: 20px; }
.muted { color: #5b5a56; }
.dock { display: flex; align-items: center; }
.app { position: relative; width: 55px; height: 48px; display: flex; align-items: center; justify-content: center; }
.app.current { width: 48px; margin: 0 3.500px; border-radius: 6px; background: rgba(255, 252, 240, .6); }
.dot, .bar { position: absolute; bottom: 0; left: 50%; width: 8px; height: 4px; margin-left: -4px; border-radius: 2px; background: #857d6e; }
.bar { width: 20px; margin-left: -10px; background: #1f7f93; }
.search {
  width: 274px;
  height: 39px;
  margin: 0 4px;
  padding: 0 12px 0 13px;
  border: 1px solid #ddcdc4;
  border-radius: 20px;
  background: #fbf4f0;
  display: flex;
  align-items: center;
}
.search span { flex: 1; margin-left: 11px; font-size: 17px; letter-spacing: -.4px; color: #5a5654; }
.tray { margin-left: auto; padding-right: 25px; display: flex; align-items: center; }
.t-cloud { margin: 0 23px 0 23px; }
.lang, .clock { display: flex; flex-direction: column; line-height: 20px; margin-top: -1px; }
.lang { width: 30px; text-align: center; margin-right: 22px; }
.t-vol { margin: 0 11px 0 9px; }
.clock { width: 98px; text-align: right; margin-right: 11px; letter-spacing: .2px; font-size: 14.500px; }
```
